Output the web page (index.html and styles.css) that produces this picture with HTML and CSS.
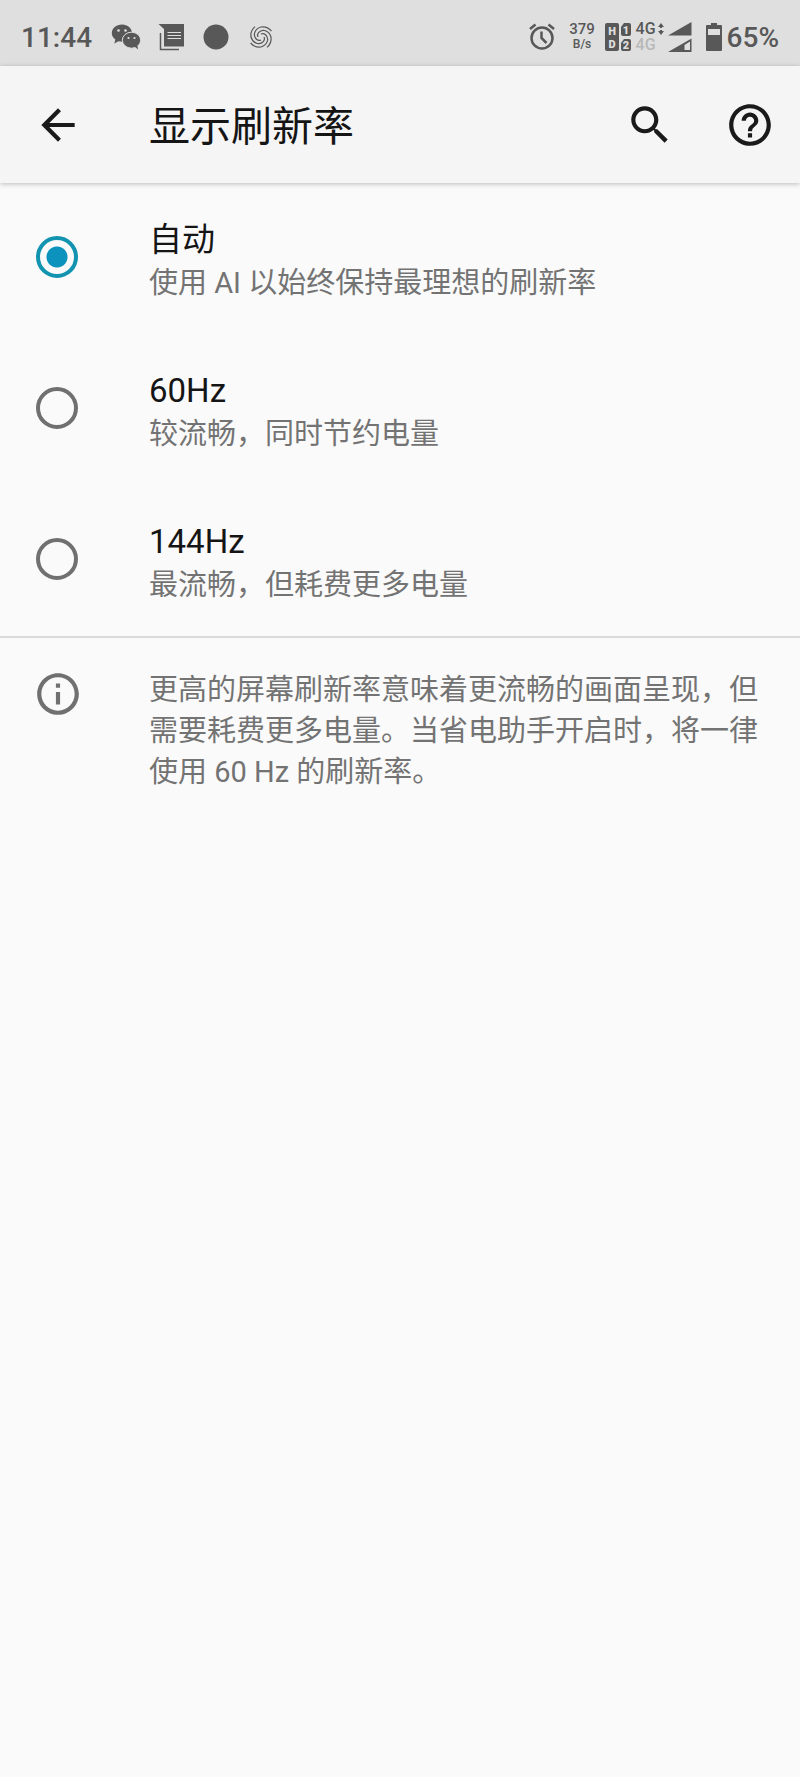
FILE: index.html
```html
<!DOCTYPE html>
<html lang="zh-CN">
<head>
<meta charset="utf-8">
<meta name="viewport" content="width=device-width, initial-scale=1">
<title>显示刷新率</title>
<link rel="stylesheet" href="styles.css">
</head>
<body>
<div class="status-bar">
  <div class="status-left">
    <span class="clock">11:44</span>
    <svg class="notice" viewBox="0 0 30 30">
      <path d="M11 2.500C5.200 2.500.8 6.200.8 11c0 2.700 1.400 5 3.600 6.600L3.300 21.500l4.200-2.200c1.100.3 2.300.4 3.500.4 5.700 0 10-4 10-8.700S16.700 2.500 11 2.500z"/>
      <ellipse class="wechat-front" cx="20.500" cy="18.200" rx="9.200" ry="8"/>
      <path d="M23 24l4 3.500-.8-5z"/>
      <circle class="hole" cx="7.500" cy="8.500" r="1.300"/>
      <circle class="hole" cx="14.500" cy="8.500" r="1.300"/>
      <circle class="hole" cx="17.500" cy="16" r="1.100"/>
      <circle class="hole" cx="23.500" cy="16" r="1.100"/>
    </svg>
    <svg class="notice" viewBox="0 0 30 30">
      <path d="M2.500 2H28v22.500H8V7z"/>
      <path class="line" d="M4.500 11v16.500H23"/>
      <path class="cut" d="M11.500 10.500H25M11.500 13.500H25M11.500 16.500H25"/>
    </svg>
    <svg class="notice" viewBox="0 0 30 30"><circle cx="15" cy="15" r="12.500"/></svg>
    <svg class="notice" viewBox="0 0 30 30">
      <g class="swirl">
        <path id="arm" d="M15 12A4 4 0 0 1 19.300 12.500A6.300 6.300 0 0 1 21.500 18.700A9 9 0 0 1 15 25A11.500 11.500 0 0 1 4.600 21"/>
        <use href="#arm" transform="rotate(90 15 15)"/>
        <use href="#arm" transform="rotate(180 15 15)"/>
        <use href="#arm" transform="rotate(270 15 15)"/>
      </g>
    </svg>
  </div>
  <div class="status-right">
    <svg class="alarm" viewBox="0 0 26 30">
      <circle cx="13" cy="16" r="10.500"/>
      <path d="M12.500 9.500V16l5 5M1 7l5.500-4.500M25 7l-5.500-4.500"/>
    </svg>
    <div class="speed"><b>379</b><span>B/s</span></div>
    <svg class="sims" viewBox="0 0 26 30">
      <rect x="0" y="1" width="14" height="28" rx="2"/>
      <path d="M19 1h5a2 2 0 0 1 2 2v9a2 2 0 0 1-2 2h-6a2 2 0 0 1-2-2V5zM19 17h5a2 2 0 0 1 2 2v8a2 2 0 0 1-2 2h-6a2 2 0 0 1-2-2v-6z"/>
      <text x="7" y="13">H</text>
      <text x="7" y="26">D</text>
      <text x="21" y="12">1</text>
      <text x="21" y="27">2</text>
    </svg>
    <div class="network">
      <div>4G<svg viewBox="0 0 6 14"><path d="M3 1l3 4H4v1H2V5H0zM3 13l3-4H4V8H2v1H0z"/></svg></div>
      <div class="idle">4G</div>
    </div>
    <svg class="signal" viewBox="0 0 24 32">
      <path d="M0 14.500L23.500 1v13.500z"/>
      <path fill-rule="evenodd" d="M0 31L23.500 17.500V31zM16.500 24v5H22v-8.500z"/>
    </svg>
    <svg class="battery" viewBox="0 0 16 28">
      <path fill-rule="evenodd" d="M5 0h6v2h4a1 1 0 0 1 1 1v24a1 1 0 0 1-1 1H1a1 1 0 0 1-1-1V3a1 1 0 0 1 1-1h4zM2 6v6h12V6z"/>
    </svg>
    <span class="percent">65%</span>
  </div>
</div>

<header class="app-bar">
  <button class="icon-btn" aria-label="返回">
    <svg viewBox="0 0 24 24"><path d="M20 11H7.830l5.590-5.590L12 4l-8 8 8 8 1.410-1.410L7.830 13H20v-2z"/></svg>
  </button>
  <h1>显示刷新率</h1>
  <div class="actions">
    <button class="icon-btn" aria-label="搜索">
      <svg viewBox="0 0 24 24"><path d="M15.500 14h-.79l-.28-.27C15.410 12.590 16 11.110 16 9.500 16 5.910 13.090 3 9.500 3S3 5.910 3 9.500 5.910 16 9.500 16c1.610 0 3.090-.59 4.230-1.570l.27.28v.79l5 4.990L20.490 19l-4.990-5zm-6 0C7.010 14 5 11.990 5 9.500S7.010 5 9.500 5 14 7.010 14 9.500 11.990 14 9.500 14z"/></svg>
    </button>
    <button class="icon-btn" aria-label="帮助">
      <svg viewBox="0 0 24 24"><path d="M11 18h2v-2h-2v2zm1-16C6.480 2 2 6.480 2 12s4.480 10 10 10 10-4.480 10-10S17.520 2 12 2zm0 18c-4.410 0-8-3.590-8-8s3.590-8 8-8 8 3.590 8 8-3.590 8-8 8zm0-14c-2.210 0-4 1.790-4 4h2c0-1.100.9-2 2-2s2 .9 2 2c0 2-3 1.750-3 5h2c0-2.250 3-2.500 3-5 0-2.210-1.790-4-4-4z"/></svg>
    </button>
  </div>
</header>

<main>
  <form class="options">
    <label class="option">
      <input type="radio" name="rate" value="auto" checked>
      <span class="text">
        <span class="name">自动</span>
        <span class="desc">使用 AI 以始终保持最理想的刷新率</span>
      </span>
    </label>
    <label class="option">
      <input type="radio" name="rate" value="60">
      <span class="text">
        <span class="name">60Hz</span>
        <span class="desc">较流畅，同时节约电量</span>
      </span>
    </label>
    <label class="option">
      <input type="radio" name="rate" value="144">
      <span class="text">
        <span class="name">144Hz</span>
        <span class="desc">最流畅，但耗费更多电量</span>
      </span>
    </label>
  </form>
  <div class="info">
    <svg viewBox="0 0 24 24"><path d="M11 7h2v2h-2zm0 4h2v6h-2zm1-9C6.480 2 2 6.480 2 12s4.480 10 10 10 10-4.480 10-10S17.520 2 12 2zm0 18c-4.410 0-8-3.590-8-8s3.590-8 8-8 8 3.590 8 8-3.590 8-8 8z"/></svg>
    <p>更高的屏幕刷新率意味着更流畅的画面呈现，但需要耗费更多电量。当省电助手开启时，将一律使用 60 Hz 的刷新率。</p>
  </div>
</main>
</body>
</html>
```

FILE: styles.css
```css
*{
  box-sizing:border-box;
}
body{
  margin:0;
  min-height:100vh;
  background:#fafafa;
  color:#151515;
  font-family:Roboto,"Noto Sans CJK SC",sans-serif;
}
svg{
  display:block;
  flex:none;
}

/* status bar */
.status-bar{
  display:flex;
  justify-content:space-between;
  align-items:center;
  height:66px;
  padding:8px 21px 0;
  background:#dfdfdf;
  color:#585858;
  fill:#585858;
}
.status-left,
.status-right{
  display:flex;
  align-items:center;
}
.status-left{
  gap:15px;
}
.clock,
.percent{
  padding-top:2px;
  font-size:28px;
  line-height:30px;
  font-weight:500;
}
.clock{
  width:75px;
}
.notice{
  width:30px;
  height:30px;
}
.wechat-front{
  stroke:#dfdfdf;
  stroke-width:1;
}
.hole{
  fill:#dfdfdf;
}
.line{
  fill:none;
  stroke:#585858;
  stroke-width:1.5;
}
.cut{
  fill:none;
  stroke:#dfdfdf;
  stroke-width:1;
}
.swirl{
  fill:none;
  stroke:#585858;
  stroke-width:1.2;
}
.alarm{
  width:26px;
  height:30px;
  margin-right:14px;
  fill:none;
  stroke:#585858;
  stroke-width:2.5;
}
.speed{
  display:flex;
  flex-direction:column;
  align-items:center;
  width:27px;
  margin-right:9px;
  line-height:15px;
}
.speed b{
  font-size:15px;
  font-weight:500;
}
.speed span{
  font-size:12px;
  font-weight:500;
}
.sims{
  width:26px;
  height:30px;
  margin-right:5px;
}
.sims text{
  fill:#dfdfdf;
  font-size:11px;
  font-weight:900;
  text-anchor:middle;
}
.network{
  width:32px;
  font-size:16px;
  line-height:16px;
  font-weight:500;
}
.network div{
  display:flex;
  align-items:center;
  gap:2px;
}
.network svg{
  width:6px;
  height:14px;
}
.network .idle{
  color:#b8b8b8;
}
.signal{
  width:24px;
  height:32px;
  margin-right:14px;
}
.battery{
  width:16px;
  height:28px;
  margin-right:5px;
}

/* app bar */
.app-bar{
  display:flex;
  align-items:center;
  height:117px;
  padding:0 25px 0 33px;
  background:#f5f5f5;
  box-shadow:0 1px 5px rgba(0,0,0,0.25);
}
.icon-btn{
  width:50px;
  height:50px;
  padding:0;
  border:none;
  background:none;
  cursor:pointer;
}
.icon-btn svg{
  width:50px;
  height:50px;
  fill:#1a1a1a;
}
h1{
  flex:1;
  margin:0 0 0 66px;
  padding-top:4px;
  font-size:41px;
  line-height:48px;
  font-weight:400;
}
.actions{
  display:flex;
  gap:50px;
}

/* options */
.options{
  border-bottom:2px solid #dadada;
}
.option{
  display:flex;
  align-items:flex-start;
  gap:71px;
  padding:35px 36px 30px;
  cursor:pointer;
}
.option input{
  flex:none;
  appearance:none;
  width:42px;
  height:42px;
  margin:18px 0 0;
  border:4px solid #707070;
  border-radius:50%;
}
.option input:checked{
  border-color:#1293b0;
  background:radial-gradient(circle,#0c93bd 10px,transparent 11px);
}
.text{
  display:flex;
  flex-direction:column;
}
.name{
  font-size:33px;
  line-height:44px;
}
.desc{
  color:#737373;
  font-size:29px;
  line-height:42px;
}

/* footer note */
.info{
  display:flex;
  align-items:flex-start;
  gap:66px;
  padding:31px 36px 31px 33px;
}
.info svg{
  width:50px;
  height:50px;
  fill:#707070;
}
.info p{
  margin:0;
  padding-top:1px;
  color:#737373;
  font-size:29px;
  line-height:41px;
}
```
